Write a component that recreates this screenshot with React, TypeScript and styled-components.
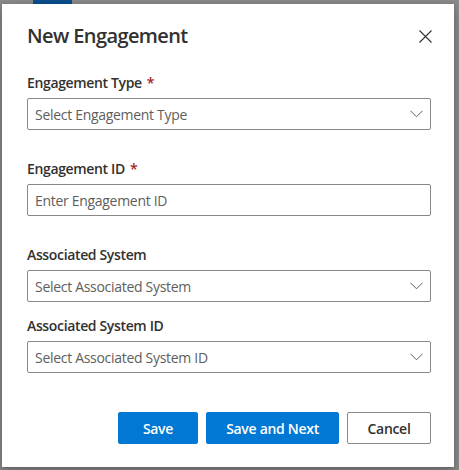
import React from "react";
import styled, { createGlobalStyle } from "styled-components";

const Global = createGlobalStyle`
  html, body { margin: 0; padding: 0; }
  body {
    width: 459px;
    height: 470px;
    overflow: hidden;
    font-family: "Open Sans", "Noto Sans", "Liberation Sans", sans-serif;
  }
  * { box-sizing: border-box; }
`;

const Backdrop = styled.div`
  position: relative;
  width: 459px;
  height: 470px;
  background: #8a8a8a;
  overflow: hidden;
`;

const PageTab = styled.div`
  position: absolute;
  left: 33px;
  top: 0;
  width: 39px;
  height: 4px;
  background: #0b4f8c;
`;

const Dialog = styled.div`
  position: absolute;
  left: 2px;
  top: 4px;
  width: 452px;
  height: 463px;
  background: #ffffff;
  box-shadow: 0 6px 14px rgba(0, 0, 0, 0.22), 0 1px 4px rgba(0, 0, 0, 0.18);
  padding: 0 23px 0 25px;
  display: flex;
  flex-direction: column;
  color: #323130;
`;

const Header = styled.div`
  display: flex;
  align-items: center;
  justify-content: space-between;
  height: 56px;
  padding-top: 8px;
`;

const Title = styled.h2`
  margin: 0;
  font-size: 20px;
  font-weight: 600;
  line-height: 28px;
  letter-spacing: -0.6px;
  color: #323130;
`;

const CloseButton = styled.button`
  border: none;
  background: transparent;
  padding: 0;
  width: 14px;
  height: 14px;
  margin-right: -1px;
  display: flex;
  align-items: center;
  justify-content: center;
  color: #323130;
  cursor: pointer;
`;

const Form = styled.div`
  display: flex;
  flex-direction: column;
  margin-top: 8px;
`;

const Field = styled.div<{ $spaced?: boolean }>`
  display: flex;
  flex-direction: column;
  margin-bottom: ${(p) => (p.$spaced ? "24px" : "9px")};
`;

const Label = styled.label`
  font-size: 14px;
  font-weight: 600;
  line-height: 20px;
  letter-spacing: -0.35px;
  padding: 5px 0;
  color: #323130;
`;

const Required = styled.span`
  color: #a4262c;
  margin-left: 5px;
`;

const Box = styled.div`
  height: 32px;
  border: 1px solid #8a8886;
  border-radius: 2px;
  display: flex;
  align-items: center;
  padding: 0 7px;
  background: #fff;
`;

const Placeholder = styled.span`
  flex: 1;
  font-size: 14px;
  letter-spacing: -0.3px;
  color: #605e5c;
  white-space: nowrap;
`;

const TextInput = styled.input`
  flex: 1;
  border: none;
  outline: none;
  padding: 0;
  font-family: inherit;
  font-size: 14px;
  letter-spacing: -0.3px;
  color: #323130;
  background: transparent;
  &::placeholder {
    color: #605e5c;
    opacity: 1;
  }
`;

const Chevron = styled.span`
  display: flex;
  align-items: center;
  color: #605e5c;
`;

const Footer = styled.div`
  display: flex;
  justify-content: flex-end;
  gap: 8px;
  margin-top: 30px;
`;

const Button = styled.button<{ $primary?: boolean; $width: number }>`
  height: 32px;
  width: ${(p) => p.$width}px;
  padding: 0;
  border-radius: 2px;
  font-family: inherit;
  font-size: 14px;
  font-weight: 600;
  letter-spacing: -0.3px;
  border: 1px solid ${(p) => (p.$primary ? "#0078d4" : "#8a8886")};
  background: ${(p) => (p.$primary ? "#0078d4" : "#ffffff")};
  color: ${(p) => (p.$primary ? "#ffffff" : "#323130")};
  cursor: pointer;
`;

const ChevronIcon = () => (
  <svg width="13" height="8" viewBox="0 0 13 8" fill="none">
    <path d="M0.5 0.8 L6.5 6.8 L12.5 0.8" stroke="currentColor" strokeWidth="1" />
  </svg>
);

const CloseIcon = () => (
  <svg width="13" height="13" viewBox="0 0 13 13" fill="none">
    <path d="M0.5 0.5 L12.5 12.5 M12.5 0.5 L0.5 12.5" stroke="currentColor" strokeWidth="1.1" />
  </svg>
);

const SelectBox = ({ text }: { text: string }) => (
  <Box>
    <Placeholder>{text}</Placeholder>
    <Chevron>
      <ChevronIcon />
    </Chevron>
  </Box>
);

export default function App() {
  return (
    <>
      <Global />
      <Backdrop>
        <PageTab />
        <Dialog role="dialog">
          <Header>
            <Title>New Engagement</Title>
            <CloseButton aria-label="Close">
              <CloseIcon />
            </CloseButton>
          </Header>
          <Form>
            <Field $spaced>
              <Label>
                Engagement Type<Required>*</Required>
              </Label>
              <SelectBox text="Select Engagement Type" />
            </Field>
            <Field $spaced>
              <Label>
                Engagement ID<Required>*</Required>
              </Label>
              <Box>
                <TextInput placeholder="Enter Engagement ID" />
              </Box>
            </Field>
            <Field>
              <Label>Associated System</Label>
              <SelectBox text="Select Associated System" />
            </Field>
            <Field>
              <Label>Associated System ID</Label>
              <SelectBox text="Select Associated System ID" />
            </Field>
          </Form>
          <Footer>
            <Button $primary $width={80}>Save</Button>
            <Button $primary $width={133}>Save and Next</Button>
            <Button $width={84}>Cancel</Button>
          </Footer>
        </Dialog>
      </Backdrop>
    </>
  );
}
